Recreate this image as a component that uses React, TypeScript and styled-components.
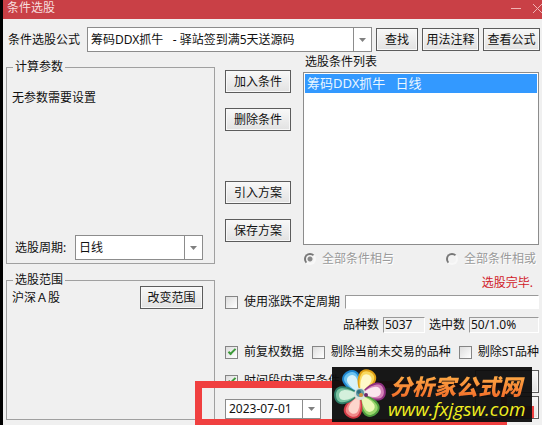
import React from "react";
import styled, { createGlobalStyle, css } from "styled-components";

const Global = createGlobalStyle`
  *, *::before, *::after { box-sizing: border-box; }
  html, body, #root { height: 100%; }
  body { margin: 0; background: #f0f0f0; overflow: hidden; }
  body, button, input, select {
    font-family: "Noto Sans", "Noto Sans CJK SC", sans-serif;
    font-size: 12px;
    line-height: 16px;
    color: #111;
  }
`;

const Dialog = styled.main`
  position: relative;
  display: flex;
  flex-direction: column;
  min-height: 100%;
  border-left: 3px solid #000;
  background: #f0f0f0;
`;

const TitleBar = styled.header`
  display: flex;
  align-items: center;
  justify-content: space-between;
  height: 19px;
  padding: 0 0 4px 4px;
  background: #c94046;
  color: #f7dede;
  overflow: hidden;
`;

const Caption = styled.h1`
  margin: 0;
  font-size: 12px;
  font-weight: 400;
  line-height: 15px;
`;

const WindowButtons = styled.div`
  display: flex;
  gap: 8px;
`;

const WindowButton = styled.button`
  width: 12px;
  height: 14px;
  padding: 0;
  border: 0;
  background: none;
  color: #f0b4b4;
  svg { display: block; }
`;

const FormulaRow = styled.div`
  display: flex;
  align-items: center;
  gap: 4px;
  height: 25px;
  margin: 8px 2px 0 5px;
`;

const Label = styled.label`
  white-space: nowrap;
`;

const Combo = styled.span<{ $grow?: boolean; $width?: number; $height?: number }>`
  display: grid;
  grid-template-columns: minmax(0, 1fr) 18px;
  height: ${(p) => p.$height ?? 25}px;
  border: 1px solid #8c8c8c;
  background: #fff;
  ${(p) => (p.$grow ? css`flex: 1; margin-left: 3px;` : css`width: ${p.$width}px;`)}
`;

const ComboSelect = styled.select`
  grid-area: 1 / 1 / 2 / 3;
  min-width: 0;
  padding: 0 20px 0 3px;
  border: 0;
  background: none;
  appearance: none;
  white-space: pre;
`;

const ComboArrow = styled.span`
  grid-area: 1 / 2;
  display: grid;
  place-items: center;
  border-left: 1px solid #8c8c8c;
  pointer-events: none;
`;

const Button = styled.button<{ $width: number }>`
  flex: none;
  width: ${(p) => p.$width}px;
  height: 23px;
  padding: 0;
  border: 1px solid #5c5c5c;
  background: linear-gradient(#f8f8f8, #e2e2e2);
  box-shadow: inset 0 0 0 1px #f8f8f8;
  white-space: nowrap;
`;

const Columns = styled.div`
  display: grid;
  grid-template-columns: 209px minmax(0, 1fr);
  gap: 10px;
  margin: 6px 3px 0;
`;

const Side = styled.div`
  display: flex;
  flex-direction: column;
  gap: 7px;
`;

const Group = styled.fieldset`
  min-width: 0;
  margin: 0;
  padding: 0 11px 3px 5px;
  border: 1px solid #a0a0a0;
  legend { padding: 0 2px; margin-left: 1px; line-height: 18px; }
`;

const GroupBody = styled.div<{ $height: number }>`
  display: flex;
  flex-direction: column;
  justify-content: space-between;
  height: ${(p) => p.$height}px;
`;

const GroupText = styled.p`
  margin: 14px 0 0;
`;

const PeriodRow = styled.div`
  display: flex;
  align-items: center;
  justify-content: space-between;
  padding-left: 3px;
`;

const ScopeRow = styled.div`
  display: flex;
  align-items: center;
  justify-content: space-between;
  margin-top: -3px;
`;

const Content = styled.div`
  display: flex;
  flex-direction: column;
  min-width: 0;
`;

const Upper = styled.div`
  display: grid;
  grid-template-columns: 66px minmax(0, 1fr);
  gap: 12px;
`;

const Actions = styled.div`
  display: flex;
  flex-direction: column;
  gap: 50px;
  padding-top: 12px;
`;

const ActionPair = styled.div`
  display: flex;
  flex-direction: column;
  gap: 15px;
`;

const ListTitle = styled.h2`
  margin: -4px 0 2px;
  padding-left: 2px;
  font-size: 12px;
  font-weight: 400;
  line-height: 16px;
`;

const ConditionList = styled.ul`
  height: 173px;
  margin: 0;
  padding: 1px;
  border: 1px solid #8c8c8c;
  background: #fff;
  list-style: none;
`;

const Condition = styled.li`
  padding: 0 2px;
  background: #3399ff;
  color: #eaf6ff;
  font-size: 13px;
  line-height: 19px;
  white-space: pre;
`;

const RadioRow = styled.div`
  display: flex;
  justify-content: space-between;
  margin: 6px 3px 0 1px;
`;

const Choice = styled.label<{ $muted?: boolean }>`
  display: flex;
  align-items: center;
  gap: 6px;
  white-space: nowrap;
  color: ${(p) => (p.$muted ? "#9a9a9a" : "#111")};
  text-shadow: ${(p) => (p.$muted ? "1px 1px #fff" : "none")};
`;

const Radio = styled.input`
  appearance: none;
  width: 12px;
  height: 12px;
  margin: 0;
  border: 2px solid;
  border-color: #777 #f8f8f8 #f8f8f8 #777;
  border-radius: 50%;
  background: #f3f3f3;
  &:checked { background: radial-gradient(circle, #888 2px, #f3f3f3 3px); }
`;

const Check = styled.input`
  appearance: none;
  display: grid;
  place-items: center;
  width: 13px;
  height: 13px;
  margin: 0;
  border: 1px solid #858585;
  background: linear-gradient(135deg, #ddd, #fff);
  &:checked::after {
    content: "";
    width: 8px;
    height: 4px;
    border: solid #3d9a3a;
    border-width: 0 0 2px 2px;
    transform: translateY(-1px) rotate(-45deg);
  }
`;

const Status = styled.output`
  align-self: flex-end;
  margin: 8px 6px 0 0;
  color: #d02028;
`;

const Row = styled.div<{ $top: number; $end?: boolean }>`
  display: flex;
  align-items: center;
  justify-content: ${(p) => (p.$end ? "flex-end" : "space-between")};
  gap: ${(p) => (p.$end ? 4 : 5)}px;
  height: 16px;
  margin-top: ${(p) => p.$top}px;
`;

const Field = styled.input<{ $width?: number; $white?: boolean }>`
  min-width: 0;
  height: ${(p) => (p.$white ? 14 : 16)}px;
  padding: 0 1px;
  border: 1px solid;
  border-color: #999 #fff #fff #999;
  border-radius: 0;
  background: ${(p) => (p.$white ? "#fff" : "#f0f0f0")};
  ${(p) => (p.$width ? css`width: ${p.$width}px;` : css`flex: 1;`)}
`;

const DateRow = styled.div`
  display: flex;
  align-items: flex-end;
  justify-content: space-between;
  margin-top: 7px;
`;

const Highlight = styled.div`
  position: absolute;
  left: 192px;
  right: 35px;
  bottom: 0;
  height: 44px;
  border: solid #f04040;
  border-width: 7px 6px 6px 7px;
  pointer-events: none;
`;

const ButtonMark = styled.div`
  position: absolute;
  right: 8px;
  bottom: 7px;
  width: 27px;
  height: 12px;
  background: #f04040;
  pointer-events: none;
`;

const Banner = styled.a`
  position: absolute;
  right: 10px;
  bottom: 3px;
  display: flex;
  align-items: center;
  width: 200px;
  height: 55px;
  background: rgba(14, 14, 14, 0.96);
  text-decoration: none;
  overflow: hidden;
  svg { flex: none; }
`;

const BannerText = styled.span`
  display: flex;
  flex-direction: column;
  flex: 1;
  align-items: flex-start;
`;

const BannerName = styled.strong`
  margin-left: 2px;
  padding-right: 4px;
  font: italic 900 22px/28px "Noto Sans CJK SC", sans-serif;
  color: transparent;
  background: linear-gradient(#ffb64b, #f26a28);
  background-clip: text;
`;

const BannerUrl = styled.span`
  font: italic 19px/20px "Open Sans", sans-serif;
  color: #f0ee20;
`;

const Arrow = () => (
  <svg width="7" height="4" aria-hidden="true"><path d="M0 0h7L3.500 4z" fill="#808080" /></svg>
);

const petals = [
  { angle: -30, edge: "#1f86cf", mid: "#6cc4f0", core: "#d8f2f8" },
  { angle: 24, edge: "#e0a013", mid: "#f9d95c", core: "#fef8c8" },
  { angle: 82, edge: "#8f2f80", mid: "#d583b8", core: "#fbe6ee" },
  { angle: 143, edge: "#4f9e3f", mid: "#9ad66c", core: "#ecf8b8" },
  { angle: 204, edge: "#d23a45", mid: "#f28a8a", core: "#fdd6cc" },
  { angle: 266, edge: "#2f7f68", mid: "#7cc4a2", core: "#d4f0dc" },
];

const Flower = () => (
  <svg width="56" height="55" viewBox="0 0 56 55" aria-hidden="true">
    {petals.map(({ angle, edge, mid, core }) => (
      <g key={angle} transform={`rotate(${angle} 28 27)`}>
        <path d="M28 26C23 21 19 16 19 9C19 4 23 1 28 1C33 1 37 4 37 9C37 16 33 21 28 26Z" fill={edge} />
        <path d="M28 25C24 20 21 15 21 9C21 5 24 3 28 3C32 3 35 5 35 9C35 15 32 20 28 25Z" fill={mid} />
        <path d="M28 25C25 20 23 16 23 11C23 8 25 6 28 6C31 6 33 8 33 11C33 16 31 20 28 25Z" fill={core} />
      </g>
    ))}
    <circle cx="28" cy="27" r="6" fill="#d9e2dc" />
    <circle cx="28" cy="26" r="4" fill="#5f9aa5" />
    <circle cx="27" cy="25" r="2" fill="#2d6b7c" />
    <circle cx="29" cy="28" r="2" fill="#d8923d" />
    <circle cx="34" cy="28" r="2" fill="#6e2868" />
  </svg>
);

type PickerProps = { id: string; options: string[]; width?: number; grow?: boolean; height?: number; label?: string };
const Picker = ({ id, options, width, grow, height, label }: PickerProps) => (
  <Combo $width={width} $grow={grow} $height={height}>
    <ComboSelect id={id} aria-label={label}>
      {options.map((o) => <option key={o}>{o}</option>)}
    </ComboSelect>
    <ComboArrow><Arrow /></ComboArrow>
  </Combo>
);

const CheckBox = ({ text, checked }: { text: string; checked?: boolean }) => (
  <Choice><Check type="checkbox" defaultChecked={checked} />{text}</Choice>
);

export default function App() {
  return (
    <>
      <Global />
      <Dialog>
        <TitleBar>
          <Caption>条件选股</Caption>
          <WindowButtons>
            <WindowButton aria-label="最小化"><svg width="12" height="14"><path d="M1 7.500h10" stroke="currentColor" /></svg></WindowButton>
            <WindowButton aria-label="关闭"><svg width="12" height="14"><path d="M3 3l9 9M12 3l-9 9" stroke="currentColor" /></svg></WindowButton>
          </WindowButtons>
        </TitleBar>
        <FormulaRow>
          <Label htmlFor="formula">条件选股公式</Label>
          <Picker id="formula" grow options={["筹码DDX抓牛\u00a0\u00a0 - 驿站签到满5天送源码"]} />
          <Button $width={42}>查找</Button>
          <Button $width={57}>用法注释</Button>
          <Button $width={57}>查看公式</Button>
        </FormulaRow>
        <Columns>
          <Side>
            <Group>
              <legend>计算参数</legend>
              <GroupBody $height={184}>
                <GroupText>无参数需要设置</GroupText>
                <PeriodRow>
                  <Label htmlFor="period">选股周期:</Label>
                  <Picker id="period" width={128} options={["日线"]} />
                </PeriodRow>
              </GroupBody>
            </Group>
            <Group>
              <legend>选股范围</legend>
              <GroupBody $height={127}>
                <ScopeRow><span>沪深Ａ股</span><Button $width={63}>改变范围</Button></ScopeRow>
              </GroupBody>
            </Group>
          </Side>
          <Content>
            <Upper>
              <Actions>
                <ActionPair><Button $width={66}>加入条件</Button><Button $width={66}>删除条件</Button></ActionPair>
                <ActionPair><Button $width={66}>引入方案</Button><Button $width={66}>保存方案</Button></ActionPair>
              </Actions>
              <div>
                <ListTitle>选股条件列表</ListTitle>
                <ConditionList><Condition>{"筹码DDX抓牛   日线"}</Condition></ConditionList>
                <RadioRow>
                  <Choice $muted><Radio type="radio" name="mode" defaultChecked disabled />全部条件相与</Choice>
                  <Choice $muted><Radio type="radio" name="mode" disabled />全部条件相或</Choice>
                </RadioRow>
              </div>
            </Upper>
            <Status>选股完毕.</Status>
            <Row $top={3}>
              <CheckBox text="使用涨跌不定周期" />
              <Field $white aria-label="周期" />
            </Row>
            <Row $top={7} $end>
              <Label htmlFor="total">品种数</Label><Field id="total" $width={42} readOnly defaultValue="5037" />
              <Label htmlFor="hits">选中数</Label><Field id="hits" $width={70} readOnly defaultValue="50/1.0%" />
            </Row>
            <Row $top={11}>
              <CheckBox text="前复权数据" checked />
              <CheckBox text="剔除当前未交易的品种" />
              <CheckBox text="剔除ST品种" />
            </Row>
            <Row $top={13}>
              <CheckBox text="时间段内满足条件" checked />
              <Button $width={64} aria-label="执行选股" />
            </Row>
            <DateRow>
              <Picker id="date" label="日期" width={96} height={20} options={["2023-07-01"]} />
              <Button $width={64} aria-label="关闭" />
            </DateRow>
          </Content>
        </Columns>
        <Highlight />
        <ButtonMark />
        <Banner href="#">
          <Flower />
          <BannerText><BannerName>分析家公式网</BannerName><BannerUrl>www.fxjgsw.com</BannerUrl></BannerText>
        </Banner>
      </Dialog>
    </>
  );
}
